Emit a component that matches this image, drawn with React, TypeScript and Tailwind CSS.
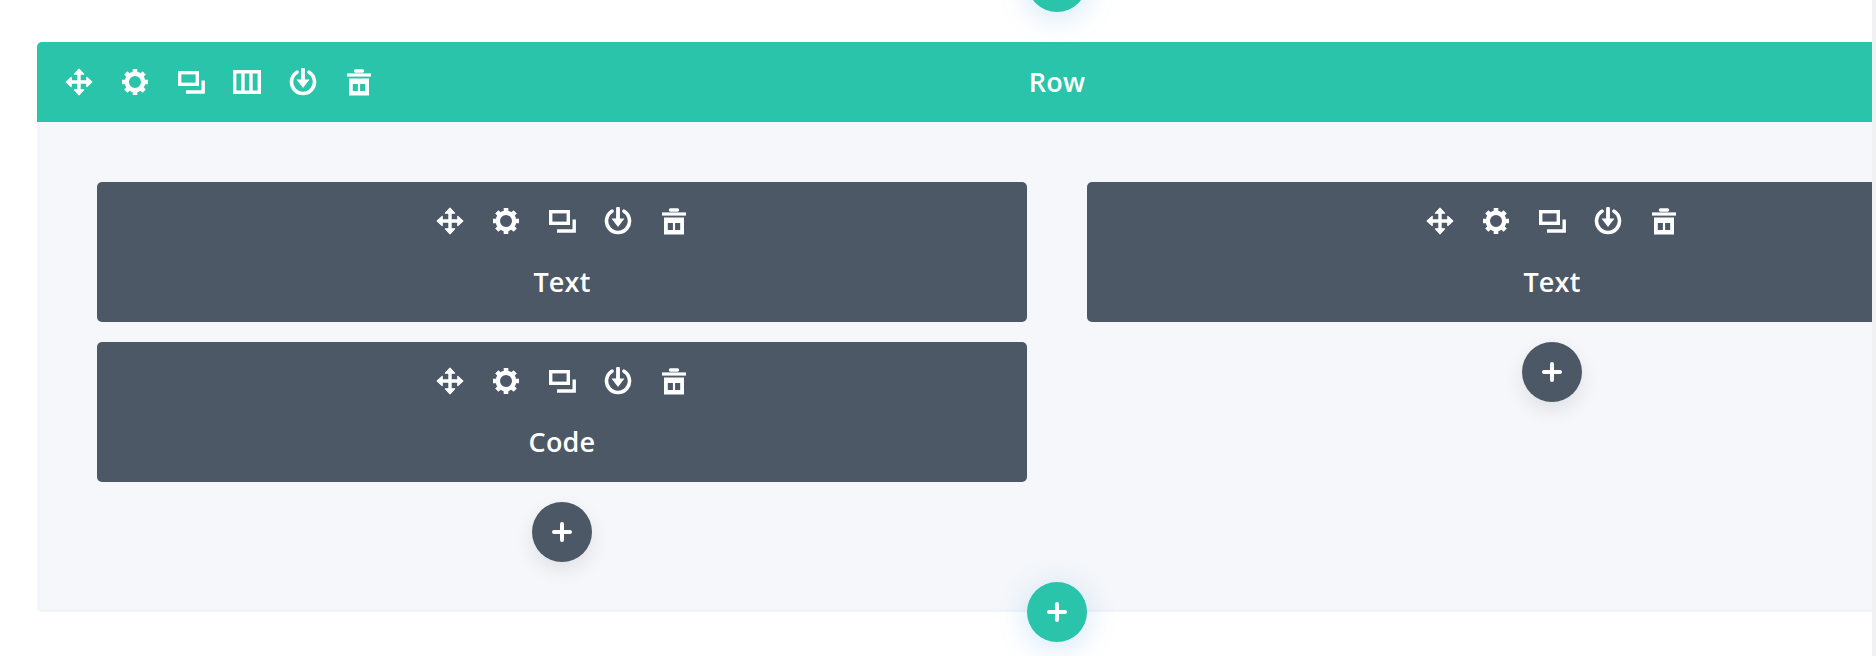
import React, { FC } from "react";

type IconName = "move" | "gear" | "copy" | "columns" | "save" | "trash";

const Icon: FC<{ name: IconName }> = ({ name }) => {
  return (
    <svg width="28" height="28" viewBox="0 0 28 28" fill="none" stroke="white" strokeWidth="3">
      {name === "move" && (
        <g>
          <path d="M4 14H24M14 4V24" strokeWidth="3.4" />
          <path
            d="M14 1.2L18.6 6.2H9.4ZM14 26.8L18.6 21.8H9.4ZM1.2 14L6.2 9.4V18.6ZM26.8 14L21.8 9.4V18.6Z"
            fill="white"
            strokeWidth="1.2"
            strokeLinejoin="round"
          />
        </g>
      )}
      {name === "gear" && (
        <g>
          <circle cx="14" cy="14" r="8.2" strokeWidth="4.4" />
          <path
            d="M14 1V5.5M14 22.5V27M1 14H5.5M22.5 14H27M4.8 4.8L8 8M20 20L23.2 23.2M4.8 23.2L8 20M20 8L23.2 4.8"
            strokeWidth="4.6"
          />
        </g>
      )}
      {name === "copy" && (
        <g strokeWidth="3.4">
          <rect x="2.7" y="4.7" width="17.6" height="11.6" />
          <path d="M9 24H26.2V12.5" />
        </g>
      )}
      {name === "columns" && (
        <path d="M1.7 3.7H26.3V24.3H1.7ZM10 3.7V24.3M18 3.7V24.3" strokeWidth="3.4" />
      )}
      {name === "save" && (
        <g>
          <path d="M8 4.2A11.5 11.5 0 1 0 20 4.2" strokeWidth="3.6" strokeLinecap="round" />
          <path d="M14 1.5V13" strokeWidth="3.8" strokeLinecap="round" />
          <path d="M7.5 11.5H20.5L14 20Z" fill="white" stroke="none" />
        </g>
      )}
      {name === "trash" && (
        <g>
          <path d="M2 7H26" strokeWidth="3.2" />
          <path d="M10.5 3H17.5" strokeWidth="3.4" strokeLinecap="round" />
          <path
            fillRule="evenodd"
            d="M4 10.5H24V27.5H4ZM7.8 16V23H12.9V16ZM15.1 16V23H20.2V16Z"
            fill="white"
            stroke="none"
          />
        </g>
      )}
    </svg>
  );
};

const PlusButton: FC<{ teal?: boolean; className?: string }> = ({ teal, className }) => {
  return (
    <div
      className={
        "w-[60px] h-[60px] rounded-full flex items-center justify-center " +
        (teal
          ? "bg-[#29c4a9] shadow-[0_5px_30px_rgba(43,135,218,0.22)] "
          : "bg-[#4c5866] shadow-[0_8px_20px_rgba(0,0,0,0.09)] ") +
        (className || "")
      }
    >
      <svg width="20" height="20" viewBox="0 0 20 20" fill="none" stroke="white" strokeWidth="4" strokeLinecap="round">
        <path d="M2 10H18M10 2V18" />
      </svg>
    </div>
  );
};

const moduleIcons: IconName[] = ["move", "gear", "copy", "save", "trash"];
const rowIcons: IconName[] = ["move", "gear", "copy", "columns", "save", "trash"];

const Module: FC<{ title: string }> = ({ title }) => {
  return (
    <div className="h-[140px] bg-[#4c5866] rounded-[5px] flex flex-col items-center pt-[25px]">
      <div className="flex gap-[28px] h-[28px]">
        {moduleIcons.map((name) => (
          <Icon key={name} name={name} />
        ))}
      </div>
      <div className="mt-[29px] text-[27px] leading-[36px] font-[550] tracking-[0.2px] text-white">{title}</div>
    </div>
  );
};

export default function App() {
  return (
    <div className="h-[656px] flex bg-white overflow-hidden font-['Open_Sans',sans-serif]">
      <div className="w-[1872px] shrink-0 overflow-hidden pl-[37px] pt-[42px]">
        <div className="relative w-[2040px]">
          <PlusButton teal className="absolute left-[990px] top-[-90px]" />
          <div className="h-20 bg-[#29c4a9] rounded-t-[5px] grid grid-cols-[1fr_auto_1fr] items-center pl-[28px]">
            <div className="flex gap-[28px]">
              {rowIcons.map((name) => (
                <Icon key={name} name={name} />
              ))}
            </div>
            <div className="text-[27px] leading-[36px] font-[550] tracking-[0.2px] text-white pr-[28px]">Row</div>
            <div />
          </div>
          <div className="h-[490px] bg-[#f5f7fa] border-b-[3px] border-x-[3px] border-[#f1f4f9] rounded-b-[5px] px-[57px] pt-[60px] grid grid-cols-2 gap-x-[60px]">
            <div className="flex flex-col gap-5 items-stretch">
              <Module title="Text" />
              <Module title="Code" />
              <PlusButton className="self-center" />
            </div>
            <div className="flex flex-col gap-5 items-stretch">
              <Module title="Text" />
              <PlusButton className="self-center" />
            </div>
          </div>
          <PlusButton teal className="absolute left-[990px] top-[540px]" />
        </div>
      </div>
      <div className="flex-1 bg-[#f1f1f3]" />
    </div>
  );
}
